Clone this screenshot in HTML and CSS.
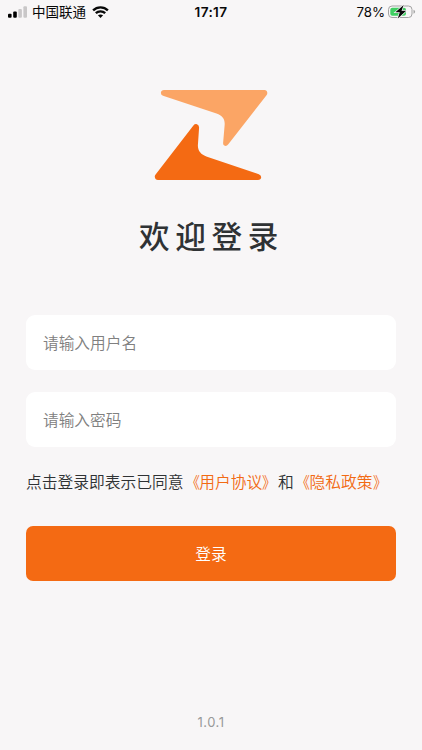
FILE: index.html
```html
<!DOCTYPE html>
<html lang="zh-CN">
<head>
<meta charset="utf-8">
<meta name="viewport" content="width=device-width, initial-scale=1">
<title>欢迎登录</title>
<link rel="stylesheet" href="styles.css">
</head>
<body>
<div class="screen">
  <header class="status">
    <div class="status-left">
      <svg class="signal" width="19" height="12" viewBox="0 0 19 12" aria-hidden="true">
        <rect x="0" y="7.7" width="3.6" height="4" rx="1"/>
        <rect x="5.2" y="5.6" width="3.6" height="6.1" rx="1"/>
        <rect class="off" x="10.3" y="3" width="3.6" height="8.7" rx="1"/>
        <rect class="off" x="15.4" y="0.3" width="3.6" height="11.4" rx="1"/>
      </svg>
      <span class="carrier">中国联通</span>
      <svg class="wifi" width="17" height="13" viewBox="0 0 17 13" aria-hidden="true">
        <path d="M1.1 4.4C5.2.3 11.8.3 15.9 4.4M3.8 7.200c2.600-2.500 6.800-2.500 9.400 0"/>
        <path class="dot" d="M8.500 12 5.900 9.300c1.500-1.200 3.700-1.200 5.200 0z"/>
      </svg>
    </div>
    <div class="clock">17:17</div>
    <div class="status-right">
      <span class="percent">78%</span>
      <svg class="battery" width="28" height="16" viewBox="0 0 28 16" aria-hidden="true">
        <rect class="shell" x=".5" y="2" width="23.5" height="11.5" rx="3.5"/>
        <path class="tip" d="M25.500 5.700v4q1.600-.5 1.600-2t-1.600-2z"/>
        <rect class="charge" x="2.3" y="3.8" width="15.7" height="7.9" rx="2"/>
        <path class="bolt" d="M15.700 1.100 7.400 8.300h4.400l-2 6.200 8.400-7.700h-4.700z"/>
      </svg>
    </div>
  </header>

  <main class="login">
    <svg class="logo" width="114" height="92" viewBox="0 0 114 92" aria-hidden="true">
      <path class="logo-top" d="M10 1H110.500Q113 1 113.300 3.700Q113.400 5 112.500 6.200L74.300 55.300Q72.500 57.600 70.300 56.600Q69 56 69.100 54L70.600 36.500C71.200 30.300 68.600 26.800 62.500 24.500L9 6.700Q6.800 5.800 6.900 3.700Q7.200 1 10 1Z"/>
      <path class="logo-bottom" d="M4 91H104Q106.900 91 107.200 88.300Q107.300 86.100 104.800 85.200L53 67.700C46.600 65.500 43.600 61.500 43.900 56L45.100 38.600Q45.200 36 43 35.200Q40.900 34.600 39.400 36.500L1.600 85.500Q.6 86.800.8 88Q1.200 91 4 91Z"/>
    </svg>
    <h1 class="title">欢迎登录</h1>
    <form class="form">
      <input class="field" type="text" placeholder="请输入用户名" aria-label="用户名">
      <input class="field" type="password" placeholder="请输入密码" aria-label="密码">
      <p class="terms">点击登录即表示已同意<a class="link"><span class="open">《</span>用户协议<span class="close">》</span></a>和<a class="link"><span class="open">《</span>隐私政策<span class="close">》</span></a></p>
      <button class="submit" type="button">登录</button>
    </form>
  </main>
  <footer class="version">1.0.1</footer>
</div>
</body>
</html>
```
FILE: styles.css
```css
* {
  box-sizing: border-box;
}

body {
  margin: 0;
  background: #f8f6f7;
  color: #2f3234;
  font-family: "Noto Sans CJK SC", sans-serif;
}

.screen {
  display: flex;
  flex-direction: column;
  height: 750px;
  overflow: hidden;
}

.status {
  display: grid;
  grid-template-columns: 1fr auto 1fr;
  align-items: center;
  height: 24px;
  padding: 0 6px 0 8px;
  color: #080808;
  font-size: 13.5px;
  line-height: 24px;
}

.status-left,
.status-right {
  display: flex;
  align-items: center;
}

.status-left {
  height: 24px;
}

.status-right {
  justify-content: flex-end;
  gap: 3px;
}

.carrier {
  margin: 0 6px 0 5px;
  padding-bottom: 2px;
  line-height: 22px;
}

.signal .off {
  fill: #c9c7c8;
}

.wifi {
  fill: none;
  stroke: #080808;
  stroke-width: 2.3;
}

.wifi .dot {
  fill: #080808;
  stroke: none;
}

.clock,
.percent {
  font-family: Inter, sans-serif;
}

.clock {
  padding-right: 2px;
  font-size: 13.6px;
  font-weight: 600;
  letter-spacing: .35px;
}

.percent {
  font-size: 13.3px;
}

.shell {
  fill: none;
  stroke: #a3a3a3;
}

.tip {
  fill: #a3a3a3;
}

.charge {
  fill: #40cf63;
}

.bolt {
  fill: #080808;
  stroke: #f8f6f7;
  stroke-width: 1.4;
  paint-order: stroke;
}

.login {
  display: flex;
  flex-direction: column;
  align-items: center;
  padding: 65px 26px 0;
}

.title {
  margin: 31px 0 0;
  font-size: 30.6px;
  font-weight: 500;
  line-height: 46px;
  letter-spacing: 5.7px;
  text-indent: 1px;
}

.form {
  display: flex;
  flex-direction: column;
  width: 100%;
  margin-top: 57px;
}

.field {
  height: 55px;
  margin: 0 0 22px;
  padding: 0 17px;
  border: 0;
  border-radius: 9px;
  background: #fff;
  color: #2f3234;
  font: 350 15.7px "Noto Sans CJK SC", sans-serif;
}

.field::placeholder {
  color: #808080;
}

.terms {
  margin: 1px 0 0;
  font-size: 15.75px;
  font-weight: 350;
  line-height: 24px;
  white-space: nowrap;
  text-spacing-trim: space-all;
}

.link {
  color: #f26a13;
}

.open,
.close {
  display: inline-block;
  width: 1em;
  transform: scaleX(.88);
}

.open {
  transform-origin: right;
}

.close {
  transform-origin: left;
}

.submit {
  height: 55px;
  margin-top: 32px;
  padding: 0 0 1px;
  border: 0;
  border-radius: 7px;
  background: #f46a13;
  color: #fff;
  font: 350 15.7px "Noto Sans CJK SC", sans-serif;
}

.logo-top {
  fill: #fba565;
}

.logo-bottom {
  fill: #f46a13;
}

.version {
  margin-top: auto;
  padding-bottom: 18px;
  color: #999;
  font: 13px/20px Inter, sans-serif;
  letter-spacing: .5px;
  text-align: center;
}
```
